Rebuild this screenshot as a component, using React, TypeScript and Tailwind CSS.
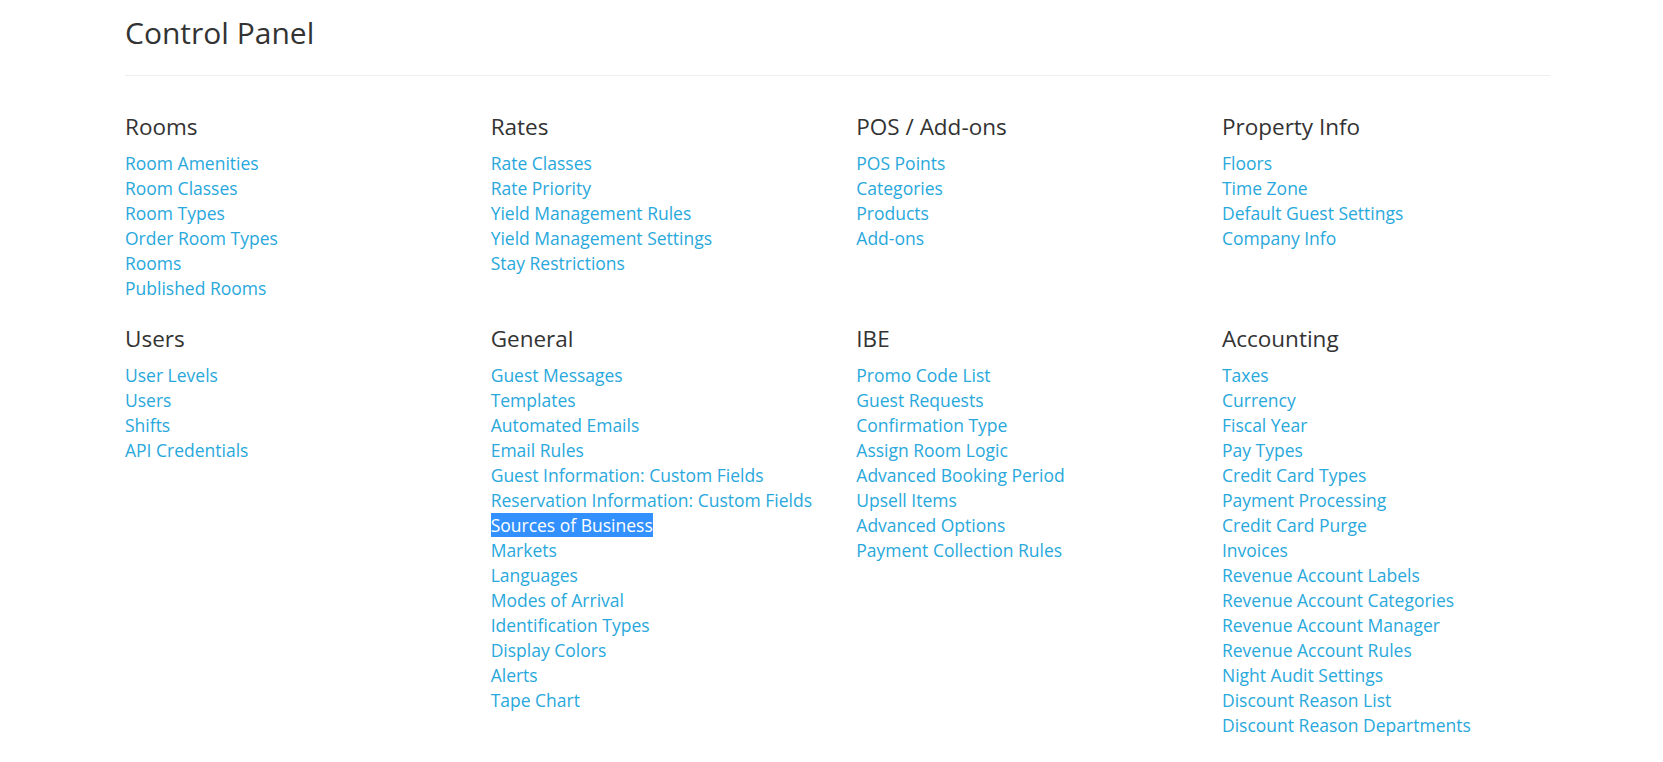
import React from "react";

type Section = { title: string; links: string[] };

const row1: Section[] = [
  { title: "Rooms", links: ["Room Amenities", "Room Classes", "Room Types", "Order Room Types", "Rooms", "Published Rooms"] },
  { title: "Rates", links: ["Rate Classes", "Rate Priority", "Yield Management Rules", "Yield Management Settings", "Stay Restrictions"] },
  { title: "POS / Add-ons", links: ["POS Points", "Categories", "Products", "Add-ons"] },
  { title: "Property Info", links: ["Floors", "Time Zone", "Default Guest Settings", "Company Info"] },
];

const row2: Section[] = [
  { title: "Users", links: ["User Levels", "Users", "Shifts", "API Credentials"] },
  {
    title: "General",
    links: [
      "Guest Messages",
      "Templates",
      "Automated Emails",
      "Email Rules",
      "Guest Information: Custom Fields",
      "Reservation Information: Custom Fields",
      "Sources of Business",
      "Markets",
      "Languages",
      "Modes of Arrival",
      "Identification Types",
      "Display Colors",
      "Alerts",
      "Tape Chart",
    ],
  },
  {
    title: "IBE",
    links: [
      "Promo Code List",
      "Guest Requests",
      "Confirmation Type",
      "Assign Room Logic",
      "Advanced Booking Period",
      "Upsell Items",
      "Advanced Options",
      "Payment Collection Rules",
    ],
  },
  {
    title: "Accounting",
    links: [
      "Taxes",
      "Currency",
      "Fiscal Year",
      "Pay Types",
      "Credit Card Types",
      "Payment Processing",
      "Credit Card Purge",
      "Invoices",
      "Revenue Account Labels",
      "Revenue Account Categories",
      "Revenue Account Manager",
      "Revenue Account Rules",
      "Night Audit Settings",
      "Discount Reason List",
      "Discount Reason Departments",
    ],
  },
];

function SectionBlock({ s }: { s: Section }) {
  return (
    <div>
      <h3 className="text-[22.5px] leading-[24px] text-[#333] font-normal mb-[12px]">{s.title}</h3>
      <ul>
        {s.links.map((l) => (
          <li key={l} className="text-[17.5px] leading-[25px]">
            {l === "Sources of Business" ? (
              <a href="#" className="bg-[#3390ff] text-white">
                {l}
              </a>
            ) : (
              <a href="#" className="text-[#29a8dc]">
                {l}
              </a>
            )}
          </li>
        ))}
      </ul>
    </div>
  );
}

export default function App() {
  return (
    <div
      className="min-h-screen bg-white pl-[125px] pt-[15px]"
      style={{ fontFamily: '"Open Sans", "Noto Sans", sans-serif' }}
    >
      <h1 className="text-[30px] leading-[36px] text-[#333] font-normal">Control Panel</h1>
      <div className="w-[1425px] h-px bg-[#eeeeee] mt-[24px]" />
      <div className="grid grid-cols-[repeat(4,365.67px)] gap-y-[26px] mt-[39px]">
        {row1.map((s) => (
          <SectionBlock key={s.title} s={s} />
        ))}
        {row2.map((s) => (
          <SectionBlock key={s.title} s={s} />
        ))}
      </div>
    </div>
  );
}
